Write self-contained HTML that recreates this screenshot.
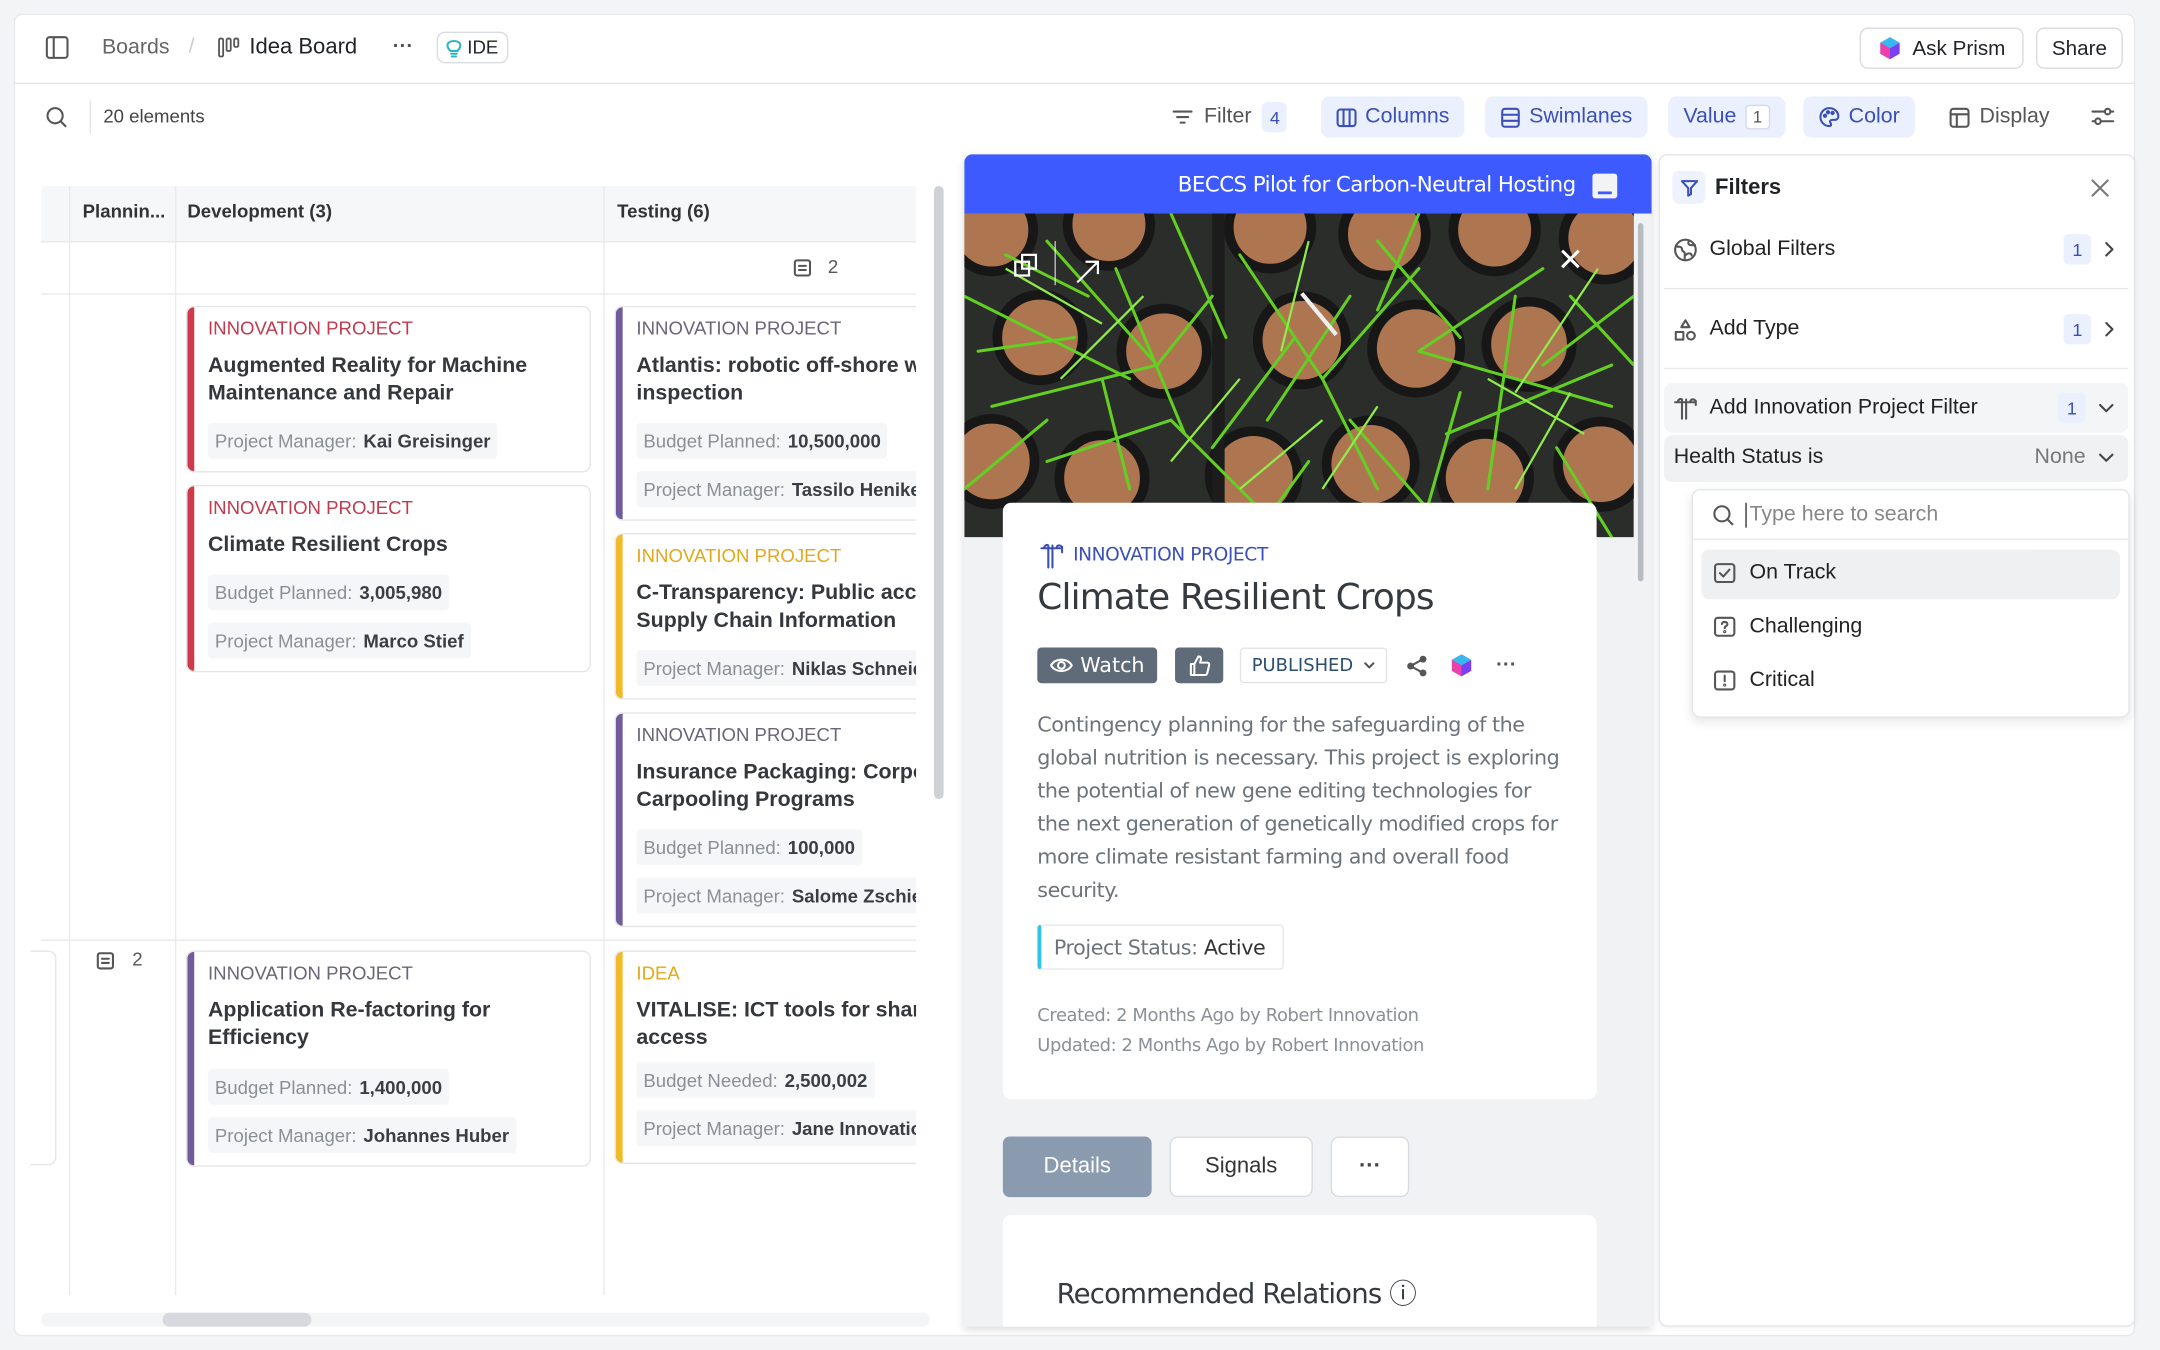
<!DOCTYPE html>
<html><head><meta charset="utf-8"><style>
*{box-sizing:border-box;margin:0;padding:0}
html,body{width:2160px;height:1350px;overflow:hidden;background:#f3f4f6}
#s{position:absolute;left:0;top:0;width:1568px;height:980px;transform:scale(1.37755);transform-origin:0 0;font-family:"Liberation Sans",sans-serif;color:#1f2328}
.a{position:absolute}
.main{left:10px;top:10px;width:1540px;height:960px;background:#fff;border:1px solid #e6e8eb;border-radius:6px}
.t{font-size:15px;white-space:nowrap}
.btn{border:1px solid #d8dbe0;border-radius:6px;background:#fff;font-size:15px;display:flex;align-items:center;justify-content:center}
.tb{display:flex;align-items:center;gap:6px;font-size:15.5px;color:#3b4fb8;height:30px;border-radius:6px;padding:0 11px;background:#eaf0fd}
.hdr{background:#f6f7f9;border-bottom:1px solid #e6e8eb;height:41px}
.vl{width:1px;background:#e8eaed}
.card{background:#fff;border:1px solid #e3e5e8;border-radius:6px;overflow:hidden}
.card .bar{position:absolute;left:0;top:0;bottom:0;width:5px}
.card .ty{position:absolute;left:15px;top:8px;font-size:13.5px}
.card .ti{position:absolute;left:15px;font-size:15.5px;font-weight:bold;color:#34383d;line-height:20px;white-space:nowrap}
.chip{position:absolute;left:15px;height:26px;background:#f5f6f8;border-radius:3px;padding:0 5px;display:flex;align-items:center;font-size:13.5px;color:#8a8f96;white-space:nowrap}
.chip b{color:#3a3e44;margin-left:5px}
.fr{display:flex;align-items:center;font-size:15.5px;color:#222;gap:9px}
.cnt{width:20px;height:22px;background:#eaf0fd;border-radius:4px;color:#3b4fb8;font-size:13px;display:flex;align-items:center;justify-content:center}
svg.i{fill:none;stroke:currentColor;stroke-width:1.5;stroke-linecap:round;stroke-linejoin:round}
</style></head><body><div id="s">
<div class="a main"></div>
<!-- top bar -->
<svg class="a" style="left:33px;top:26px" width="17" height="17" viewBox="0 0 17 17" fill="none" stroke="#555" stroke-width="1.5"><rect x="1" y="1" width="15" height="15" rx="2"/><line x1="6" y1="1" x2="6" y2="16"/></svg>
<div class="a t" style="left:74px;top:26px;color:#666;font-size:15.5px">Boards</div>
<div class="a t" style="left:137px;top:25px;color:#ccc">/</div>
<svg class="a" style="left:158px;top:27px" width="16" height="16" viewBox="0 0 16 16" fill="none" stroke="#555" stroke-width="1.3"><rect x="1" y="1" width="3" height="13" rx="1"/><rect x="6.5" y="1" width="3" height="9" rx="1"/><rect x="12" y="1" width="3" height="6" rx="1"/></svg>
<div class="a t" style="left:181px;top:26px;font-size:16px">Idea Board</div>
<div class="a t" style="left:285px;top:25px;color:#555;font-weight:bold">···</div>
<div class="a btn" style="left:317px;top:23px;width:52px;height:23px;font-size:13.5px;gap:4px"><svg class="i" width="11" height="14" viewBox="0 0 11 14" style="color:#2bb5c9"><path d="M3 9 C1 7 0.5 5.5 1 4 C2 1 9 1 10 4 C10.5 5.5 10 7 8 9 Z M3.5 11 H7.5 M4 13 H7"/></svg>IDE</div>
<div class="a btn" style="left:1350px;top:20px;width:119px;height:30px;gap:7px"><svg width="18" height="18" viewBox="0 0 18 18"><polygon points="9,1 16,5 16,13 9,17 2,13 2,5" fill="#7b3ff2"/><polygon points="9,1 16,5 9,9 2,5" fill="#39b8f0"/><polygon points="2,5 9,9 9,17 2,13" fill="#ec3fa8"/></svg>Ask Prism</div>
<div class="a btn" style="left:1478px;top:20px;width:63px;height:30px">Share</div>
<div class="a" style="left:10px;top:60px;width:1540px;height:1px;background:#e4e6e9"></div>
<!-- toolbar -->
<svg class="a" style="left:33px;top:77px" width="16" height="16" viewBox="0 0 16 16" fill="none" stroke="#555" stroke-width="1.5"><circle cx="7" cy="7" r="5.5"/><line x1="11" y1="11" x2="15" y2="15"/></svg>
<div class="a" style="left:65px;top:73px;width:1px;height:24px;background:#e3e5e8"></div>
<div class="a t" style="left:75px;top:77px;font-size:13.5px;color:#444">20 elements</div>
<div class="a" style="left:851px;top:70px;display:flex;align-items:center;gap:8px;font-size:15.5px;color:#555;height:30px"><svg class="i" width="15" height="14" viewBox="0 0 15 14"><path d="M1 3H14M3.5 7H11.5M6 11H9"/></svg>Filter<span class="cnt" style="width:18px">4</span></div>
<div class="a tb" style="left:959px;top:70px"><svg class="i" width="15" height="15" viewBox="0 0 15 15"><rect x="1" y="1.5" width="13" height="12" rx="2"/><path d="M5.3 1.5V13.5M9.7 1.5V13.5"/></svg>Columns</div>
<div class="a tb" style="left:1078px;top:70px"><svg class="i" width="15" height="15" viewBox="0 0 15 15"><rect x="1.5" y="1" width="12" height="13" rx="2"/><path d="M1.5 5.3H13.5M1.5 9.7H13.5"/></svg>Swimlanes</div>
<div class="a tb" style="left:1211px;top:70px">Value <span style="border:1px solid #d4dbe8;background:#fff;border-radius:3px;font-size:12px;padding:1px 5px;color:#555">1</span></div>
<div class="a tb" style="left:1309px;top:70px"><svg class="i" width="16" height="16" viewBox="0 0 16 16"><path d="M8 1.5A6.5 6.5 0 1 0 8 14.5C9.5 14.5 9.5 13 8.7 12C8 11 8.8 10 10 10H12C13.5 10 14.5 9 14.5 7.5A6.5 6 0 0 0 8 1.5Z"/><circle cx="4.8" cy="7" r=".8"/><circle cx="7" cy="4.5" r=".8"/><circle cx="10.3" cy="5" r=".8"/></svg>Color</div>
<div class="a" style="left:1415px;top:70px;display:flex;align-items:center;gap:7px;height:30px;font-size:15.5px;color:#555"><svg class="i" width="15" height="15" viewBox="0 0 15 15"><rect x="1" y="1" width="13" height="13" rx="2"/><path d="M1 5H14M5.5 5V14"/></svg>Display</div>
<svg class="a i" style="left:1518px;top:77px;color:#555" width="17" height="15" viewBox="0 0 17 15"><path d="M1 4H10M14 4H16M1 11H3M7 11H16"/><circle cx="12" cy="4" r="2"/><circle cx="5" cy="11" r="2"/></svg>
<!-- board -->
<div class="a hdr" style="left:30px;top:135px;width:635px"></div>
<div class="a t" style="left:60px;top:146px;font-size:13.5px;font-weight:bold;color:#333">Plannin...</div>
<div class="a t" style="left:136px;top:146px;font-size:13.5px;font-weight:bold;color:#333">Development (3)</div>
<div class="a t" style="left:448px;top:146px;font-size:13.5px;font-weight:bold;color:#333">Testing (6)</div>
<div class="a vl" style="left:50px;top:135px;height:805px"></div>
<div class="a vl" style="left:127px;top:135px;height:805px"></div>
<div class="a vl" style="left:438px;top:135px;height:805px"></div>
<div class="a" style="left:30px;top:213px;width:635px;height:1px;background:#e8eaed"></div>
<div class="a" style="left:30px;top:682px;width:635px;height:1px;background:#e8eaed"></div>
<svg class="a i" style="left:576px;top:188px;color:#555" width="13" height="13" viewBox="0 0 13 13"><rect x="1" y="1" width="11" height="11" rx="1.5"/><path d="M4 5H9M4 8H9"/></svg>
<div class="a t" style="left:601px;top:186px;font-size:13.5px;color:#555">2</div>
<svg class="a i" style="left:70px;top:691px;color:#555" width="13" height="13" viewBox="0 0 13 13"><rect x="1" y="1" width="11" height="11" rx="1.5"/><path d="M4 5H9M4 8H9"/></svg>
<div class="a t" style="left:96px;top:689px;font-size:13.5px;color:#555">2</div>
<div class="a" style="left:22px;top:690px;width:19px;height:156px;border:1px solid #e3e5e8;border-left:none;border-radius:0 6px 6px 0;background:#fff"></div>

<div class="a card" style="left:135px;top:222px;width:294px;height:121px"><div class="bar" style="background:#d1394b"></div><div class="ty" style="color:#c23a4d">INNOVATION PROJECT</div><div class="ti" style="top:33px">Augmented Reality for Machine<br>Maintenance and Repair</div><div class="chip" style="top:84px">Project Manager:<b>Kai Greisinger</b></div></div>
<div class="a card" style="left:135px;top:352px;width:294px;height:136px"><div class="bar" style="background:#d1394b"></div><div class="ty" style="color:#c23a4d">INNOVATION PROJECT</div><div class="ti" style="top:33px">Climate Resilient Crops</div><div class="chip" style="top:64px">Budget Planned:<b>3,005,980</b></div><div class="chip" style="top:99px">Project Manager:<b>Marco Stief</b></div></div>
<div class="a card" style="left:135px;top:690px;width:294px;height:157px"><div class="bar" style="background:#725b9a"></div><div class="ty" style="color:#6b6478">INNOVATION PROJECT</div><div class="ti" style="top:33px">Application Re-factoring for<br>Efficiency</div><div class="chip" style="top:85px">Budget Planned:<b>1,400,000</b></div><div class="chip" style="top:120px">Project Manager:<b>Johannes Huber</b></div></div>

<div class="a" style="left:446px;top:222px;width:219px;height:630px;overflow:hidden">
<div class="a card" style="left:0;top:0;width:260px;height:156px"><div class="bar" style="background:#725b9a"></div><div class="ty" style="color:#6b6478">INNOVATION PROJECT</div><div class="ti" style="top:33px">Atlantis: robotic off-shore w<br>inspection</div><div class="chip" style="top:84px">Budget Planned:<b>10,500,000</b></div><div class="chip" style="top:119px">Project Manager:<b>Tassilo Henike</b></div></div>
<div class="a card" style="left:0;top:165px;width:260px;height:121px"><div class="bar" style="background:#f2b928"></div><div class="ty" style="color:#e3a81a">INNOVATION PROJECT</div><div class="ti" style="top:33px">C-Transparency: Public acc<br>Supply Chain Information</div><div class="chip" style="top:84px">Project Manager:<b>Niklas Schneid</b></div></div>
<div class="a card" style="left:0;top:295px;width:260px;height:156px"><div class="bar" style="background:#725b9a"></div><div class="ty" style="color:#6b6478">INNOVATION PROJECT</div><div class="ti" style="top:33px">Insurance Packaging: Corpo<br>Carpooling Programs</div><div class="chip" style="top:84px">Budget Planned:<b>100,000</b></div><div class="chip" style="top:119px">Project Manager:<b>Salome Zschie</b></div></div>
<div class="a card" style="left:0;top:468px;width:260px;height:155px"><div class="bar" style="background:#f2b928"></div><div class="ty" style="color:#e3a81a">IDEA</div><div class="ti" style="top:33px">VITALISE: ICT tools for shar<br>access</div><div class="chip" style="top:80px">Budget Needed:<b>2,500,002</b></div><div class="chip" style="top:115px">Project Manager:<b>Jane Innovatio</b></div></div>
</div>
<div class="a" style="left:678px;top:135px;width:7px;height:445px;background:#cfd2d6;border-radius:4px"></div>
<div class="a" style="left:30px;top:953px;width:645px;height:10px;background:#f4f5f7;border-radius:5px"></div>
<div class="a" style="left:118px;top:953px;width:108px;height:10px;background:#d6d9dd;border-radius:5px"></div>

<!-- detail panel -->
<div class="a" style="left:700px;top:112px;width:499px;height:851px;background:#f0f2f4;border-radius:6px 6px 0 0;box-shadow:0 2px 6px rgba(0,0,0,.15);overflow:hidden">
<div class="a" style="left:0;top:0;width:499px;height:43px;background:#3d5afe"></div>
<div class="a t" style="left:155px;top:13px;color:#fff;font-size:15.5px;font-family:'DejaVu Sans',sans-serif;letter-spacing:-.4px">BECCS Pilot for Carbon-Neutral Hosting</div>
<div class="a" style="left:456px;top:14px;width:18px;height:18px;background:#f3f3f5;border-radius:2px"><div style="position:absolute;left:4px;bottom:3px;width:10px;height:2px;background:#3d5afe"></div></div>
<svg class="a" style="left:0;top:43px" width="486" height="235" viewBox="0 0 486 235">
<rect width="486" height="235" fill="#2b2d2b"/>
<g fill="#ae7650" stroke="#161716" stroke-width="7">
<circle cx="20" cy="12" r="30"/><circle cx="105" cy="8" r="30"/><circle cx="222" cy="10" r="30"/><circle cx="305" cy="15" r="30"/><circle cx="385" cy="12" r="30"/><circle cx="465" cy="18" r="30"/>
<circle cx="55" cy="90" r="31"/><circle cx="145" cy="100" r="31"/><circle cx="245" cy="92" r="32"/><circle cx="328" cy="98" r="32"/><circle cx="410" cy="95" r="31"/>
<circle cx="20" cy="180" r="31"/><circle cx="100" cy="192" r="31"/><circle cx="210" cy="190" r="32"/><circle cx="295" cy="182" r="32"/><circle cx="378" cy="192" r="32"/><circle cx="462" cy="182" r="31"/>
</g>
<rect x="180" y="0" width="9" height="235" fill="#1b1c1b"/>
<g stroke="#62cf22" stroke-width="2.2" fill="none" stroke-linecap="round">
<path d="M0 60 L120 120 M20 140 L140 110 L60 20 M140 110 L180 60 M110 40 L160 160 M200 30 L260 120 L330 40 M260 120 L300 200 M240 90 L180 170 M330 100 L420 40 M330 100 L470 140 M400 60 L380 200 M420 110 L486 60 M60 180 L150 150 L230 230 M280 150 L350 230 M300 20 L360 90 M10 100 L80 90 M430 170 L470 235 M220 150 L280 60 M120 200 L100 120 M350 160 L470 110 M0 200 L60 150 M150 0 L190 90 M330 0 L300 70 M440 60 L486 110 M30 30 L90 60 M250 180 L210 235 M360 130 L330 235"/>
</g>
<g stroke="#90ee4a" stroke-width="1.6" fill="none"><path d="M30 40 L100 80 M250 20 L230 100 M380 120 L450 160 M150 180 L200 120 M300 140 L260 200 M460 40 L400 130 M70 120 L130 60 M200 200 L260 150 M400 200 L440 130"/></g>
<line x1="245" y1="58" x2="270" y2="88" stroke="#eee" stroke-width="3"/>
<g fill="none" stroke="#fff" stroke-width="1.6"><rect x="42" y="30" width="10" height="10"/><rect x="37" y="35" width="10" height="10"/><path d="M82 50 L97 35 M88 35 H97 V44"/><path d="M434 27 L446 39 M446 27 L434 39" stroke-width="2.2"/></g>
<line x1="66" y1="20" x2="66" y2="52" stroke="#fff" stroke-opacity=".7"/>
</svg>
<div class="a" style="left:28px;top:253px;width:431px;height:433px;background:#fff;border-radius:6px"></div>
<svg class="a i" style="left:54px;top:281px;color:#3b4fb8" width="20" height="20" viewBox="0 0 20 20"><path d="M2 5H17M4 5C4 3 6 2 7 3M7 3V19M10 3V19M13 5C13 3 15 2 17 4V8"/></svg>
<div class="a t" style="left:79px;top:283px;font-size:13.5px;color:#3b4fb8;font-family:'DejaVu Sans',sans-serif;letter-spacing:-.3px">INNOVATION PROJECT</div>
<div class="a t" style="left:53px;top:307px;font-size:26px;color:#353a40;font-family:'DejaVu Sans',sans-serif;letter-spacing:-.6px">Climate Resilient Crops</div>
<div class="a" style="left:53px;top:358px;width:87px;height:26px;background:#5f6b78;border-radius:3px;color:#fff;font-size:15px;display:flex;align-items:center;justify-content:center;gap:5px;font-family:'DejaVu Sans',sans-serif"><svg class="i" width="17" height="12" viewBox="0 0 17 12"><path d="M1 6C4 0.5 13 0.5 16 6C13 11.5 4 11.5 1 6Z"/><circle cx="8.5" cy="6" r="2.5"/></svg>Watch</div>
<div class="a" style="left:153px;top:358px;width:35px;height:26px;background:#5f6b78;border-radius:3px;color:#fff;display:flex;align-items:center;justify-content:center"><svg class="i" width="16" height="16" viewBox="0 0 16 16"><path d="M1.5 7H4V15H1.5ZM4 7L7 1.5C8.5 1.5 9 2.5 8.7 4L8.2 6H13.5C14.5 6 15 7 14.7 8L13.3 14C13 14.7 12.5 15 11.8 15H4"/></svg></div>
<div class="a" style="left:200px;top:358px;width:107px;height:26px;background:#fff;border:1px solid #e1e4e8;border-radius:3px;color:#2a4e6c;font-size:13px;display:flex;align-items:center;justify-content:center;gap:8px;font-family:'DejaVu Sans',sans-serif">PUBLISHED <svg class="i" width="8" height="6" viewBox="0 0 8 6" style="color:#555"><path d="M1 1.5L4 4.5L7 1.5"/></svg></div>
<svg class="a" style="left:320px;top:363px" width="17" height="17" viewBox="0 0 17 17"><g fill="#555"><circle cx="13" cy="3.5" r="2.5"/><circle cx="4" cy="8.5" r="2.5"/><circle cx="13" cy="13.5" r="2.5"/></g><path d="M13 3.5L4 8.5L13 13.5" stroke="#555" stroke-width="1.5" fill="none"/></svg>
<svg class="a" style="left:352px;top:362px" width="18" height="18" viewBox="0 0 18 18"><polygon points="9,1 16,5 16,13 9,17 2,13 2,5" fill="#7b3ff2"/><polygon points="9,1 16,5 9,9 2,5" fill="#39b8f0"/><polygon points="2,5 9,9 9,17 2,13" fill="#ec3fa8"/></svg>
<div class="a t" style="left:386px;top:362px;color:#555;font-weight:bold">···</div>
<div class="a" style="left:53px;top:402px;width:382px;font-size:15px;line-height:24px;color:#6c737a;font-family:'DejaVu Sans',sans-serif;letter-spacing:-.35px">Contingency planning for the safeguarding of the global nutrition is necessary. This project is exploring the potential of new gene editing technologies for the next generation of genetically modified crops for more climate resistant farming and overall food security.</div>
<div class="a" style="left:53px;top:559px;width:179px;height:33px;border:1px solid #e3e5e8;border-left:3px solid #2ec4e4;border-radius:3px;display:flex;align-items:center;padding-left:9px;font-size:15px;color:#6c737a;font-family:'DejaVu Sans',sans-serif;letter-spacing:-.3px;white-space:nowrap">Project Status:&nbsp;<span style="color:#333">Active</span></div>
<div class="a t" style="left:53px;top:615px;font-size:13px;color:#8a9096;line-height:22px;font-family:'DejaVu Sans',sans-serif;letter-spacing:-.3px">Created: 2 Months Ago by Robert Innovation<br>Updated: 2 Months Ago by Robert Innovation</div>
<div class="a" style="left:28px;top:713px;width:108px;height:44px;background:#8a9bb0;border-radius:5px;color:#fff;font-size:16px;display:flex;align-items:center;justify-content:center">Details</div>
<div class="a btn" style="left:149px;top:713px;width:104px;height:44px;font-size:16px;color:#333">Signals</div>
<div class="a btn" style="left:266px;top:713px;width:57px;height:44px;font-size:16px;font-weight:bold;color:#444">···</div>
<div class="a" style="left:28px;top:770px;width:431px;height:90px;background:#fff;border-radius:6px"></div>
<div class="a t" style="left:67px;top:811px;font-size:20px;color:#353a40;font-family:'DejaVu Sans',sans-serif;letter-spacing:-.6px">Recommended Relations ⓘ</div>
<div class="a" style="left:489px;top:50px;width:4px;height:260px;background:#b7bcc2;border-radius:2px"></div>
</div>

<!-- filters -->
<div class="a" style="left:1204px;top:112px;width:346px;height:851px;background:#fff;border:1px solid #e3e5e8;border-radius:6px;box-shadow:0 1px 4px rgba(0,0,0,.06)"></div>
<div class="a" style="left:1214px;top:124px;width:24px;height:24px;background:#eef2fd;border-radius:5px;color:#3b4fb8;display:flex;align-items:center;justify-content:center"><svg class="i" width="13" height="13" viewBox="0 0 13 13"><path d="M1 1.5H12L7.5 6.5V11L5.5 12V6.5Z"/></svg></div>
<div class="a t" style="left:1245px;top:128px;font-size:16px;font-weight:bold">Filters</div>
<svg class="a i" style="left:1518px;top:130px;color:#777" width="13" height="13" viewBox="0 0 13 13"><path d="M1 1L12 12M12 1L1 12"/></svg>
<div class="a fr" style="left:1215px;top:170px;width:320px"><svg class="i" width="17" height="17" viewBox="0 0 17 17" style="color:#555"><circle cx="8.5" cy="8.5" r="7.5"/><path d="M2 6C4 6 6 6 6 8C6 10 8 9 8 11V15.5M11 2C10 4 11 5 13 5H15.5M9 12C10 10.5 13 10.5 13 12.5"/></svg>Global Filters<span style="flex:1"></span><span class="cnt">1</span><svg class="i" width="8" height="12" viewBox="0 0 8 12" style="color:#444"><path d="M2 1.5L6.5 6L2 10.5"/></svg></div>
<div class="a" style="left:1208px;top:209px;width:337px;height:1px;background:#e6e8eb"></div>
<div class="a fr" style="left:1215px;top:228px;width:320px"><svg class="i" width="17" height="17" viewBox="0 0 17 17" style="color:#555"><path d="M8.5 1.5L11.5 6.5H5.5Z"/><rect x="1.5" y="10" width="5.5" height="5.5"/><circle cx="12.5" cy="12.7" r="2.8"/></svg>Add Type<span style="flex:1"></span><span class="cnt">1</span><svg class="i" width="8" height="12" viewBox="0 0 8 12" style="color:#444"><path d="M2 1.5L6.5 6L2 10.5"/></svg></div>
<div class="a" style="left:1208px;top:267px;width:337px;height:1px;background:#e6e8eb"></div>
<div class="a" style="left:1208px;top:278px;width:337px;height:36px;background:#f4f5f7;border-radius:6px"></div>
<div class="a fr" style="left:1215px;top:285px;width:320px"><svg class="i" width="17" height="17" viewBox="0 0 17 17" style="color:#555"><path d="M1 4H16M3 4C3 2 5 1 6 2M6 2V16M9 2V16M12 4C12 2 14 1 16 3V6"/></svg>Add Innovation Project Filter<span style="flex:1"></span><span class="cnt">1</span><svg class="i" width="12" height="8" viewBox="0 0 12 8" style="color:#444"><path d="M1.5 2L6 6.5L10.5 2"/></svg></div>
<div class="a" style="left:1208px;top:316px;width:337px;height:34px;background:#f0f1f3;border-radius:6px"></div>
<div class="a fr" style="left:1215px;top:323px;width:320px">Health Status is<span style="flex:1"></span><span style="color:#777">None</span><svg class="i" width="12" height="8" viewBox="0 0 12 8" style="color:#444"><path d="M1.5 2L6 6.5L10.5 2"/></svg></div>
<div class="a" style="left:1228px;top:355px;width:318px;height:166px;background:#fff;border:1px solid #e3e5e8;border-radius:6px;box-shadow:0 3px 8px rgba(0,0,0,.1)"></div>
<svg class="a" style="left:1243px;top:366px" width="16" height="16" viewBox="0 0 16 16" fill="none" stroke="#555" stroke-width="1.5"><circle cx="7" cy="7" r="5.5"/><line x1="11" y1="11" x2="15" y2="15"/></svg>
<div class="a t" style="left:1267px;top:365px;font-size:15.5px;color:#888;border-left:1px solid #333;padding-left:2px">Type here to search</div>
<div class="a" style="left:1229px;top:391px;width:316px;height:1px;background:#e6e8eb"></div>
<div class="a" style="left:1235px;top:399px;width:304px;height:36px;background:#eff0f2;border-radius:6px"></div>
<div class="a fr" style="left:1244px;top:407px;gap:10px"><svg class="i" width="16" height="16" viewBox="0 0 16 16" style="color:#555"><rect x="1" y="1.5" width="14" height="13" rx="2"/><path d="M4.5 8L7 10.5L11.5 5.5"/></svg>On Track</div>
<div class="a fr" style="left:1244px;top:446px;gap:10px"><svg class="i" width="16" height="16" viewBox="0 0 16 16" style="color:#555"><rect x="1" y="1.5" width="14" height="13" rx="2"/><path d="M6 6C6 4 10 4 10 6C10 7.5 8 7.5 8 9"/><circle cx="8" cy="11.5" r=".4"/></svg>Challenging</div>
<div class="a fr" style="left:1244px;top:485px;gap:10px"><svg class="i" width="16" height="16" viewBox="0 0 16 16" style="color:#555"><rect x="1" y="1.5" width="14" height="13" rx="2"/><path d="M8 4.5V8.5"/><circle cx="8" cy="11.3" r=".4"/></svg>Critical</div>
</div></body></html>
